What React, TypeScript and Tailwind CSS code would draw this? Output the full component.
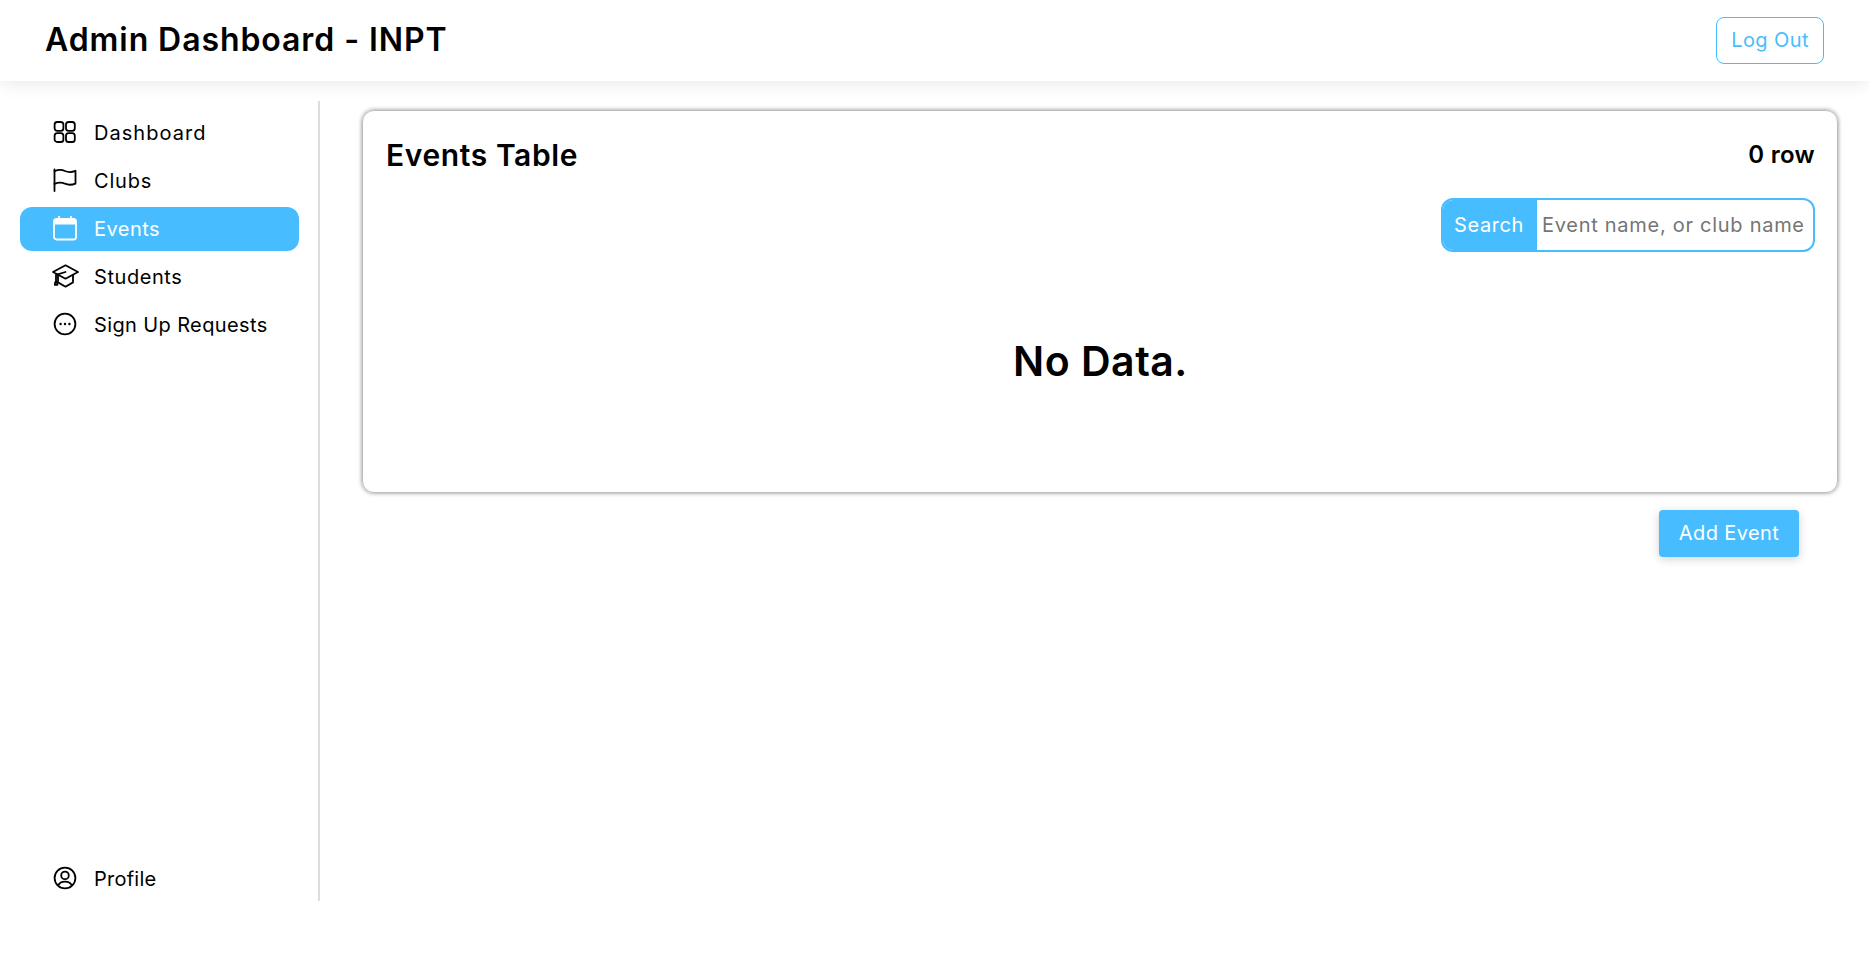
import React from "react";

const stroke = { fill: "none", stroke: "currentColor", strokeWidth: 1.8, strokeLinecap: "round", strokeLinejoin: "round" } as const;

function GridIcon() {
  return (
    <svg width="24" height="24" viewBox="0 0 24 24" {...stroke}>
      <rect x="1.6" y="2" width="8.8" height="8.8" rx="2.6" />
      <rect x="13" y="2" width="8.8" height="8.8" rx="2.6" />
      <rect x="1.6" y="13.2" width="8.8" height="8.8" rx="2.6" />
      <rect x="13" y="13.2" width="8.8" height="8.8" rx="2.6" />
    </svg>
  );
}
function FlagIcon() {
  return (
    <svg width="24" height="24" viewBox="0 0 24 24" {...stroke}>
      <path d="M1.5 1.5V23" />
      <path d="M1.5 3.2C6 1.2 9 1.6 12 3c3 1.3 6.5 1.5 10.5-.2V15.6c-4 1.6-7.5 1.4-10.5.1-3-1.4-6-1.7-10.5.2" />
    </svg>
  );
}
function CalendarIcon() {
  return (
    <svg width="24" height="26" viewBox="0 0 24 26" fill="none">
      <rect x="1" y="4" width="22" height="20.5" rx="2.6" stroke="currentColor" strokeWidth="1.8" />
      <path d="M1 7a3 3 0 0 1 3-3h16a3 3 0 0 1 3 3v2.5H1z" fill="currentColor" />
      <rect x="5.2" y="1" width="1.8" height="4" fill="currentColor" />
      <rect x="17" y="1" width="1.8" height="4" fill="currentColor" />
    </svg>
  );
}
function CapIcon() {
  return (
    <svg width="27" height="24" viewBox="0 0 27 24" className="shrink-0" {...stroke}>
      <path d="M13.5 1.3L26 8 13.5 14.7 1 8z" />
      <path d="M6 11.2v7.2l7.5 4.3 7.5-4.3v-7.2" />
      <path d="M13.5 8L4 10.8v7.4" />
      <path d="M3.2 18.2h1.7l.5 2.6H2.8z" />
    </svg>
  );
}
function DotsIcon() {
  return (
    <svg width="24" height="24" viewBox="0 0 24 24" fill="none">
      <circle cx="12" cy="12" r="10.4" stroke="currentColor" strokeWidth="1.8" />
      <circle cx="7.6" cy="12" r="1.2" fill="currentColor" />
      <circle cx="12" cy="12" r="1.2" fill="currentColor" />
      <circle cx="16.4" cy="12" r="1.2" fill="currentColor" />
    </svg>
  );
}
function ProfileIcon() {
  return (
    <svg width="24" height="24" viewBox="0 0 24 24" fill="none" stroke="currentColor" strokeWidth="1.8">
      <circle cx="12" cy="12" r="10.4" />
      <circle cx="12" cy="9.4" r="3.8" />
      <path d="M5 19.5c1.6-3 4-3.9 7-3.9s5.4.9 7 3.9" />
    </svg>
  );
}

function NavItem({ icon, label, tracking, active }: { icon: React.ReactNode; label: string; tracking: string; active?: boolean }) {
  return (
    <a
      className={
        active
          ? "flex h-[44px] items-center rounded-[12px] bg-[#47bdff] pl-[33px] text-white"
          : "flex h-[44px] items-center rounded-[12px] pl-[33px] text-black"
      }
    >
      <span className="mb-[2px] flex w-[24px] items-center justify-center">{icon}</span>
      <span className={"ml-[17px] text-[20px] " + tracking}>{label}</span>
    </a>
  );
}

export default function App() {
  return (
    <div className="flex h-[953px] flex-col overflow-hidden bg-white font-['Inter',sans-serif] text-black">
      <header className="relative z-10 flex h-[81px] items-center justify-between bg-white pl-[45px] pr-[45px] shadow-[0_4px_16px_rgba(0,0,0,0.08)]">
        <h1 className="mb-[2px] text-[32px] font-semibold tracking-[0.92px]">Admin Dashboard - INPT</h1>
        <button className="h-[47px] w-[108px] rounded-[8px] border border-[#47bdff] pb-[2px] text-[20px] tracking-[0.4px] text-[#47bdff]">
          Log Out
        </button>
      </header>
      <div className="flex flex-1 pt-[20px] pb-[52px]">
        <aside className="flex w-[320px] flex-col justify-between border-r-2 border-[#dddddd] pl-[20px] pr-[19px]">
          <nav className="flex flex-col gap-[4px] pt-[10px]">
            <NavItem icon={<GridIcon />} label="Dashboard" tracking="tracking-[1.04px]" />
            <NavItem icon={<FlagIcon />} label="Clubs" tracking="tracking-[0.8px]" />
            <NavItem icon={<CalendarIcon />} label="Events" tracking="tracking-[0.45px]" active />
            <NavItem icon={<CapIcon />} label="Students" tracking="tracking-[0.56px]" />
            <NavItem icon={<DotsIcon />} label="Sign Up Requests" tracking="tracking-[0.375px]" />
          </nav>
          <div>
            <NavItem icon={<ProfileIcon />} label="Profile" tracking="tracking-[0.24px]" />
          </div>
        </aside>
        <main className="ml-[42px] mr-[31px] flex-1 pt-[9px]">
          <section className="flex h-[383px] flex-col rounded-[12px] border border-[#bdbdbd] pl-[23px] pr-[22px] shadow-[0_0_4px_rgba(0,0,0,0.45)]">
            <div className="flex h-[87px] items-center justify-between">
              <h2 className="mt-[1px] text-[30px] font-semibold tracking-[0.6px]">Events Table</h2>
              <span className="mt-[1px] text-[24px] font-semibold tracking-[0.3px]">0 row</span>
            </div>
            <div className="flex justify-end">
              <div className="flex h-[54px] w-[374px] overflow-hidden rounded-[12px] border-2 border-[#47bdff]">
                <span className="flex w-[94px] items-center justify-center bg-[#47bdff] pr-[2px] text-[20px] tracking-[0.6px] text-white">
                  Search
                </span>
                <span className="flex flex-1 items-center whitespace-nowrap pl-[5px] text-[20px] tracking-[0.72px] text-[#757575]">
                  Event name, or club name
                </span>
              </div>
            </div>
            <div className="mt-[81px] text-center text-[41px] font-semibold leading-[56px] tracking-[0.5px]">No Data.</div>
          </section>
          <div className="flex justify-end pr-[39px] pt-[17px]">
            <button className="h-[47px] w-[140px] rounded-[4px] bg-[#47bdff] pb-[1px] text-[20px] tracking-[0.4px] text-white shadow-[0_2px_10px_rgba(0,0,0,0.18)]">
              Add Event
            </button>
          </div>
        </main>
      </div>
    </div>
  );
}
